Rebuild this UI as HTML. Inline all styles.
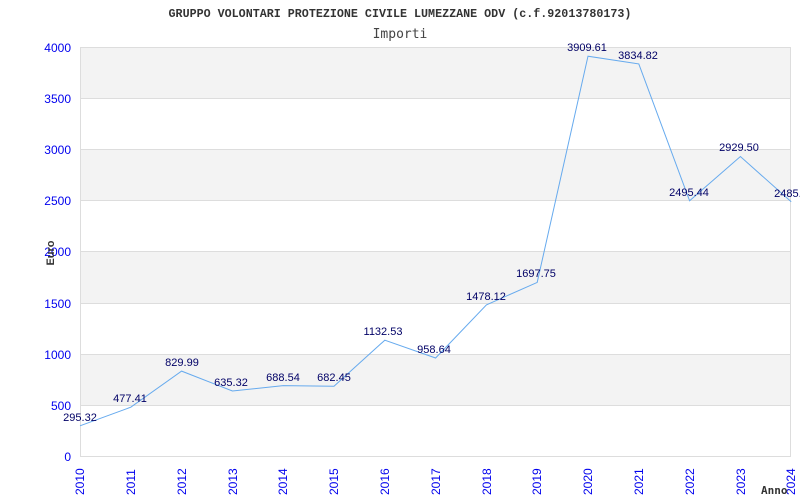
<!DOCTYPE html><html><head><style>body{margin:0;background:#fff}svg{display:block}</style></head><body>
<svg width="800" height="500" xmlns="http://www.w3.org/2000/svg" font-family="Liberation Sans, sans-serif">
<text x="400" y="17" text-anchor="middle" font-family="Liberation Mono, monospace" font-weight="bold" font-size="11.7" fill="#333">GRUPPO VOLONTARI PROTEZIONE CIVILE LUMEZZANE ODV (c.f.92013780173)</text>
<text x="400" y="38" text-anchor="middle" font-family="DejaVu Sans Mono, monospace" font-size="13" fill="#444">Importi</text>
<g fill="#f3f3f3"><rect x="80" y="47" width="711" height="51"/><rect x="80" y="149" width="711" height="51"/><rect x="80" y="251" width="711" height="52"/><rect x="80" y="354" width="711" height="51"/></g>
<g stroke="#ddd" stroke-width="1"><line x1="80" y1="47.5" x2="791" y2="47.5"/><line x1="80" y1="98.5" x2="791" y2="98.5"/><line x1="80" y1="149.5" x2="791" y2="149.5"/><line x1="80" y1="200.5" x2="791" y2="200.5"/><line x1="80" y1="251.5" x2="791" y2="251.5"/><line x1="80" y1="303.5" x2="791" y2="303.5"/><line x1="80" y1="354.5" x2="791" y2="354.5"/><line x1="80" y1="405.5" x2="791" y2="405.5"/><line x1="80" y1="456.5" x2="791" y2="456.5"/><line x1="80.5" y1="47" x2="80.5" y2="457"/><line x1="790.5" y1="47" x2="790.5" y2="457"/></g>
<g fill="#0000ee" font-size="12" text-anchor="end"><text x="71" y="52">4000</text><text x="71" y="103">3500</text><text x="71" y="154">3000</text><text x="71" y="205">2500</text><text x="71" y="256">2000</text><text x="71" y="308">1500</text><text x="71" y="359">1000</text><text x="71" y="410">500</text><text x="71" y="461">0</text></g>
<text transform="translate(54,253) rotate(-90)" text-anchor="middle" font-size="11" font-weight="bold" fill="#333">Euro</text>
<g fill="#0000ee" font-size="12">
<text transform="translate(84,495) rotate(-90)">2010</text><text transform="translate(135,495) rotate(-90)">2011</text><text transform="translate(186,495) rotate(-90)">2012</text><text transform="translate(237,495) rotate(-90)">2013</text><text transform="translate(287,495) rotate(-90)">2014</text><text transform="translate(338,495) rotate(-90)">2015</text><text transform="translate(389,495) rotate(-90)">2016</text><text transform="translate(440,495) rotate(-90)">2017</text><text transform="translate(491,495) rotate(-90)">2018</text><text transform="translate(541,495) rotate(-90)">2019</text><text transform="translate(592,495) rotate(-90)">2020</text><text transform="translate(643,495) rotate(-90)">2021</text><text transform="translate(694,495) rotate(-90)">2022</text><text transform="translate(745,495) rotate(-90)">2023</text><text transform="translate(795,495) rotate(-90)">2024</text></g>
<text x="761" y="494" font-family="DejaVu Sans Mono, monospace" font-weight="bold" font-size="11" fill="#333">Anno</text>
<polyline fill="none" stroke="#66aaee" stroke-width="1" points="80,425.8 130.8,407.2 181.6,371.1 232.4,391 283.2,385.6 334,386.2 384.8,340.2 435.6,358 486.4,304.9 537.2,282.4 588,56.2 638.8,63.9 689.6,200.8 740.4,156.5 791.2,201.8"/>
<g fill="#000066" font-size="11" text-anchor="middle">
<text x="80" y="421">295.32</text><text x="130" y="402">477.41</text><text x="182" y="366">829.99</text><text x="231" y="386">635.32</text><text x="283" y="381">688.54</text><text x="334" y="381">682.45</text><text x="383" y="335">1132.53</text><text x="434" y="353">958.64</text><text x="486" y="300">1478.12</text><text x="536" y="277">1697.75</text><text x="587" y="51">3909.61</text><text x="638" y="59">3834.82</text><text x="689" y="196">2495.44</text><text x="739" y="151">2929.50</text><text x="791" y="197">2485.9</text></g>
</svg></body></html>
